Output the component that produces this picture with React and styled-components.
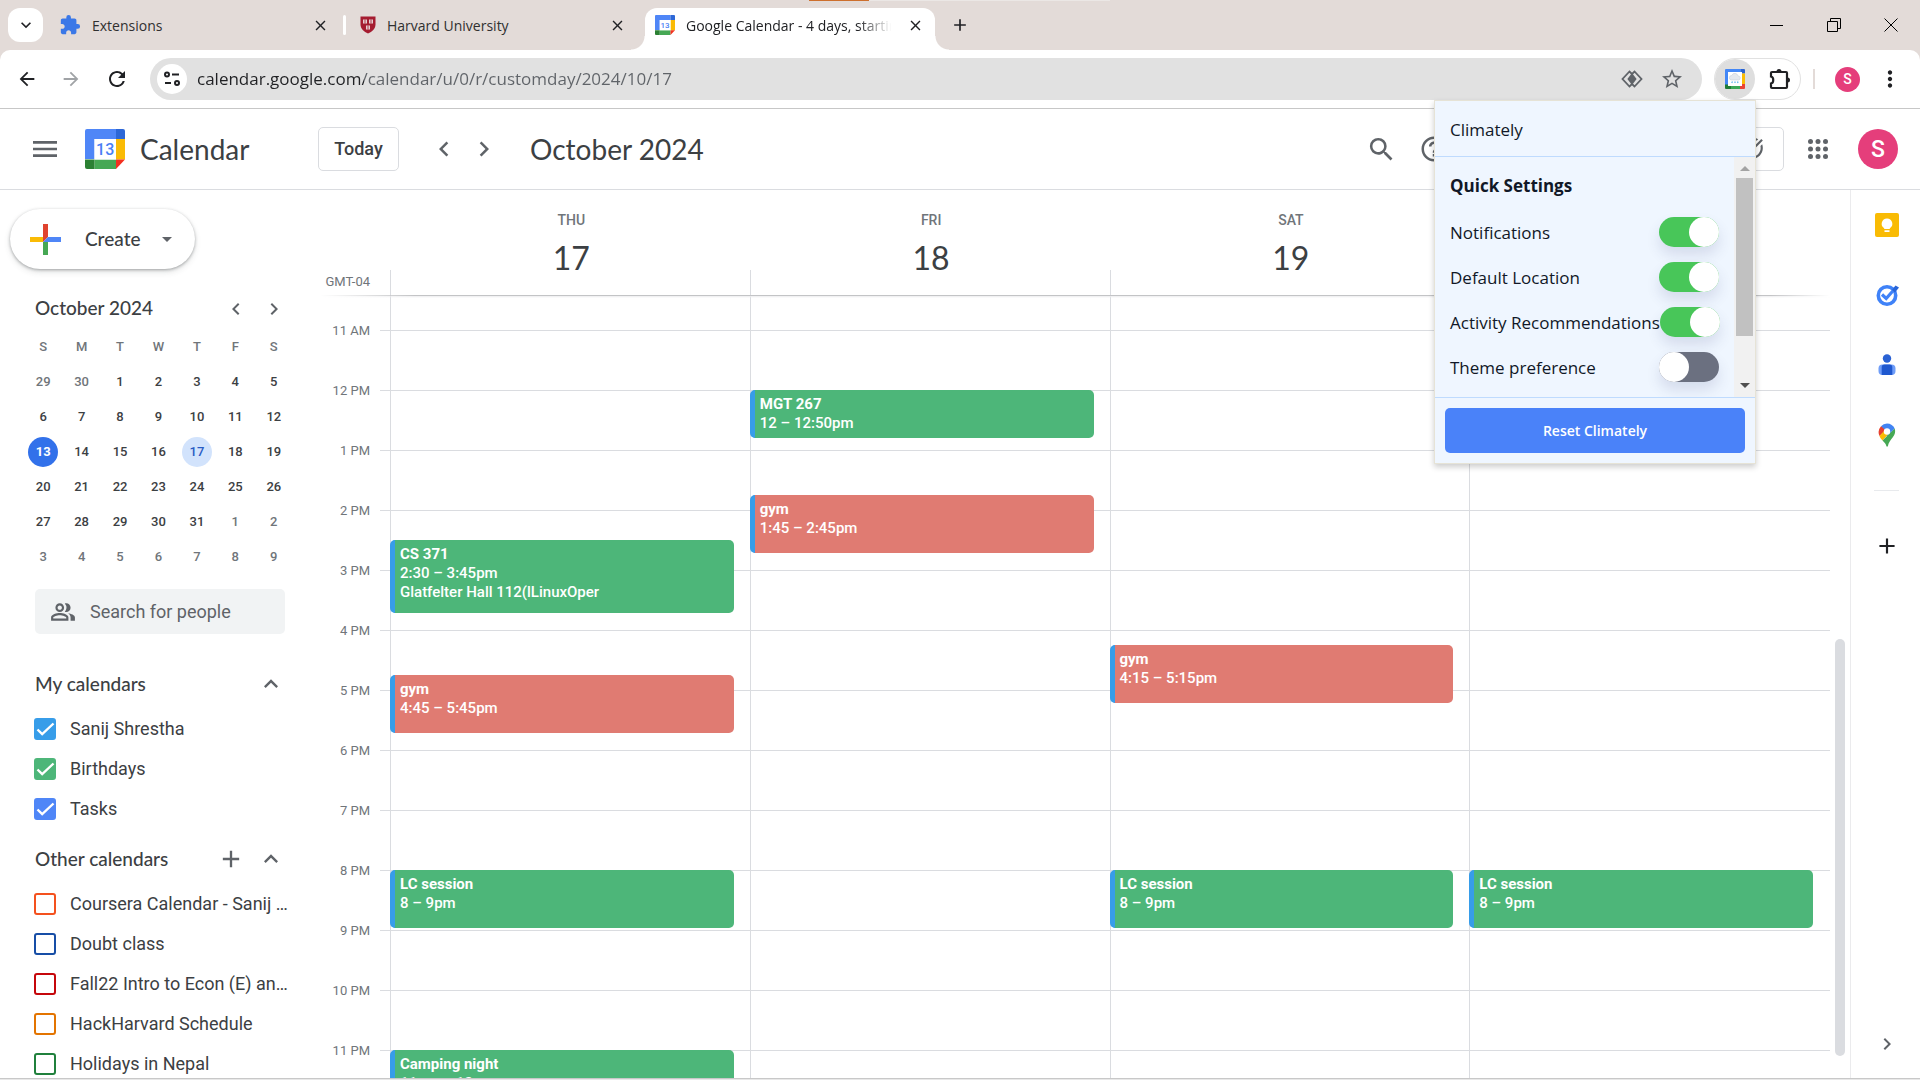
import React from "react";
import styled, { createGlobalStyle, css } from "styled-components";
import {
  MdAdd,
  MdArrowBack,
  MdArrowDropDown,
  MdArrowForward,
  MdChevronLeft,
  MdChevronRight,
  MdClose,
  MdExpandLess,
  MdExpandMore,
  MdExtension,
  MdHelpOutline,
  MdMenu,
  MdMoreVert,
  MdOutlinePeopleAlt,
  MdRefresh,
  MdSearch,
  MdStarOutline,
  MdTaskAlt,
} from "react-icons/md";

const ui = `"Open Sans", "Noto Sans", sans-serif`;
const body = `Roboto, "Liberation Sans", sans-serif`;
const display = `Lato, Roboto, sans-serif`;

const c = {
  strip: "#e3dbd8",
  text: "#3c4043",
  muted: "#70757a",
  icon: "#5f6368",
  line: "#dadce0",
  green: "#4db679",
  red: "#e07b72",
  blue: "#379de9",
  pink: "#e53e7b",
};

const GlobalStyle = createGlobalStyle`
  *, *::before, *::after { box-sizing: border-box; }
  html, body, #root { height: 100%; }
  body { margin: 0; background: #fff; font-family: ${body}; color: ${c.text}; overflow: hidden; }
  button, input { font: inherit; color: inherit; }
  button { border: 0; padding: 0; background: none; }
  h1, h2, h3, p, ul { margin: 0; padding: 0; font-weight: 400; }
  svg { display: block; flex: none; }
`;

const Page = styled.div`
  position: relative;
  display: flex;
  flex-direction: column;
  height: 100vh;
  overflow: hidden;
  background: ${c.strip};
`;

const IconButton = styled.button`
  display: grid;
  place-items: center;
  flex: none;
  width: ${(p) => p.$w || 40}px;
  height: ${(p) => p.$h || 40}px;
  color: ${(p) => p.$color || c.icon};
`;

/* ---------- browser frame ---------- */

const TabStrip = styled.div`
  display: flex;
  align-items: flex-end;
  flex: none;
  height: 50px;
  padding-left: 8px;
  background:
    linear-gradient(#cd6f2d, #cd6f2d) 809px 0 / 60px 1px no-repeat,
    linear-gradient(#ebe7e5, #ebe7e5) 869px 0 / 241px 1px no-repeat,
    ${c.strip};
`;

const TabSearch = styled(IconButton)`
  margin: 0 2px 8px 0;
  border-radius: 12px;
  background: #fff;
`;

const Tab = styled.div`
  position: relative;
  display: flex;
  align-items: center;
  width: ${(p) => p.$w}px;
  height: 42px;
  padding: 0 8px 8px 14px;
  font: 14px/20px ${ui};
  color: #303030;
  ${(p) =>
    p.$active &&
    css`
      margin-left: 5px;
      padding: 0 5px 8px 10px;
      border-radius: 12px 12px 0 0;
      background: #fff;
      color: #202124;
      &::before,
      &::after {
        content: "";
        position: absolute;
        bottom: 0;
        width: 14px;
        height: 14px;
      }
      &::before {
        right: 100%;
        background: radial-gradient(circle at 0 0, transparent 13px, #fff 14px);
      }
      &::after {
        left: 100%;
        background: radial-gradient(circle at 100% 0, transparent 13px, #fff 14px);
      }
    `}
`;

const TabTitle = styled.span`
  flex: 1;
  min-width: 0;
  margin-left: 11px;
  padding-top: 1px;
  overflow: hidden;
  white-space: nowrap;
  ${(p) => p.$fade && "mask-image: linear-gradient(90deg, #000 80%, transparent 96%);"}
`;

const TabDivider = styled.span`
  width: 3px;
  height: 20px;
  margin-bottom: 15px;
  border-radius: 2px;
  background: #fff;
`;

const WindowButtons = styled.div`
  display: flex;
  align-self: stretch;
  margin-left: auto;
  padding-right: 1px;
`;

const Toolbar = styled.div`
  display: flex;
  align-items: center;
  flex: none;
  height: 59px;
  padding-left: 7px;
  border-bottom: 1px solid #c7c7c7;
  border-radius: 10px 10px 0 0;
  background: #fff;
`;

const Omnibox = styled.form`
  display: flex;
  align-items: center;
  flex: 1;
  height: 42px;
  margin: 0 12px 0 11px;
  padding: 0 10px 0 7px;
  border-radius: 21px;
  background: #e1e1e1;
`;

const SiteInfo = styled(IconButton)`
  border-radius: 50%;
  background: #fff;
`;

const Url = styled.input`
  flex: 1;
  min-width: 0;
  height: 30px;
  margin-left: 10px;
  padding: 0;
  border: 0;
  outline: 0;
  background: linear-gradient(90deg, #202124 167px, #5f6368 167px);
  background-clip: text;
  -webkit-text-fill-color: transparent;
  font: 17px/30px ${ui};
`;

const ExtensionPill = styled.div`
  display: flex;
  flex: none;
  gap: 5px;
  width: 87px;
  height: 42px;
  border: 1px solid #e1e1e1;
  border-radius: 21px;
`;

const PillButton = styled(IconButton)`
  border-radius: 50%;
  background: ${(p) => (p.$on ? "#dedede" : "none")};
`;

const BarDivider = styled.span`
  width: 2px;
  height: 20px;
  margin: 0 20px 0 12px;
  background: ${c.strip};
`;

const Avatar = styled.button`
  flex: none;
  width: ${(p) => p.$size}px;
  height: ${(p) => p.$size}px;
  border-radius: 50%;
  background: ${c.pink};
  color: #fff;
  font: 500 ${(p) => p.$font}px/1 ${body};
`;

/* ---------- calendar app ---------- */

const AppShell = styled.div`
  display: flex;
  flex-direction: column;
  flex: 1;
  min-height: 0;
  background: #fff;
`;

const AppHeader = styled.header`
  display: flex;
  align-items: center;
  flex: none;
  height: 81px;
  padding: 0 22px 0 20px;
  border-bottom: 1px solid ${c.line};
`;

const Brand = styled.a`
  display: flex;
  align-items: center;
  gap: 15px;
  width: 233px;
  margin-left: 15px;
  color: ${c.text};
  font: 28px/32px ${display};
  text-decoration: none;
`;

const TodayButton = styled.button`
  width: 81px;
  height: 44px;
  margin-right: 25px;
  border: 1px solid ${c.line};
  border-radius: 5px;
  font: 500 18px/24px ${body};
`;

const Period = styled.h1`
  margin-left: 26px;
  font: 28px/32px ${display};
`;

const HeaderTools = styled.div`
  display: flex;
  align-items: center;
  gap: 20px;
  margin-left: auto;
`;

const SearchTools = styled.div`
  display: flex;
  gap: 3px;
`;

const ViewSwitch = styled.div`
  display: flex;
  justify-content: flex-end;
  width: 127px;
  height: 44px;
  margin: 0 -6px 0 178px;
  border: 1px solid ${c.line};
  border-radius: 5px;
`;

const Columns = styled.div`
  display: flex;
  flex: 1;
  min-height: 0;
`;

const Sidebar = styled.aside`
  flex: none;
  width: 320px;
  padding-top: 19px;
  overflow: hidden;
`;

const CreateButton = styled.button`
  display: flex;
  align-items: center;
  width: 185px;
  height: 60px;
  margin-left: 10px;
  padding: 0 16px 0 20px;
  border-radius: 30px;
  box-shadow: 0 1px 3px rgba(60, 64, 67, 0.4), 0 3px 6px rgba(60, 64, 67, 0.15);
  font: 500 19px/24px ${display};
  & span {
    flex: 1;
    margin-left: 24px;
    text-align: left;
  }
`;

const MiniHeader = styled.div`
  display: flex;
  align-items: center;
  height: 40px;
  margin-top: 20px;
  padding: 0 27px 0 35px;
  & h2 {
    flex: 1;
    padding-bottom: 2px;
    font: 500 19px/24px ${display};
  }
`;

const MiniTable = styled.table`
  width: 269px;
  margin: 0 0 15px 24px;
  border-collapse: collapse;
  table-layout: fixed;
  font: 500 13px/30px ${body};
  & th,
  & td {
    height: 35px;
    padding: 0;
    text-align: center;
    font-weight: 500;
  }
  & th {
    color: ${c.muted};
  }
`;

const DayNumber = styled.span`
  display: block;
  width: 30px;
  height: 30px;
  margin: 0 auto;
  border-radius: 50%;
  color: ${(p) => (p.$out ? c.muted : c.text)};
  ${(p) => p.$today && "background: #3271ea; color: #fff; font-weight: 700;"}
  ${(p) => p.$picked && "background: #d2e3fc; color: #2a5bc4;"}
`;

const PeopleSearch = styled.label`
  display: flex;
  align-items: center;
  gap: 14px;
  width: 250px;
  height: 45px;
  margin-left: 35px;
  padding: 0 14px 0 15px;
  border-radius: 5px;
  background: #f1f3f4;
  color: ${c.icon};
  & input {
    flex: 1;
    min-width: 0;
    padding: 0;
    border: 0;
    outline: 0;
    background: none;
    font: 18px/24px ${body};
  }
  & input::placeholder {
    color: ${c.icon};
    opacity: 1;
  }
`;

const ListHeader = styled.div`
  display: flex;
  align-items: center;
  height: 50px;
  margin-top: ${(p) => p.$top}px;
  padding: 0 29px 0 35px;
  & h3 {
    flex: 1;
    font: 500 19px/24px ${display};
  }
`;

const CalendarList = styled.ul`
  list-style: none;
`;

const CalendarItem = styled.label`
  display: flex;
  align-items: center;
  gap: 14px;
  height: 40px;
  padding: 0 20px 0 34px;
  font: 18px/24px ${body};
  white-space: nowrap;
`;

const CheckWrap = styled.span`
  display: grid;
  flex: none;
  & > * {
    grid-area: 1 / 1;
  }
  & svg {
    pointer-events: none;
  }
`;

const CheckBox = styled.input`
  appearance: none;
  width: 22px;
  height: 22px;
  margin: 0;
  border: 2px solid ${(p) => p.$color};
  border-radius: 3px;
  &:checked {
    background: ${(p) => p.$color};
  }
`;

/* ---------- day grid ---------- */

const Main = styled.main`
  display: flex;
  flex-direction: column;
  flex: 1;
  min-width: 0;
`;

const DayHeads = styled.div`
  display: flex;
  flex: none;
  height: 105px;
  padding-right: 21px;
`;

const Zone = styled.div`
  flex: none;
  align-self: flex-end;
  width: 70px;
  padding: 0 20px 3px 0;
  text-align: right;
  white-space: nowrap;
  color: ${c.muted};
  font: 13px/20px ${body};
`;

const DayHead = styled.div`
  flex: 1;
  padding: 20px 0 0 3px;
  text-align: center;
  color: ${c.muted};
  background: linear-gradient(${c.line}, ${c.line}) 0 100% / 1px 25px no-repeat;
  font: 500 14px/20px ${body};
  & strong {
    display: block;
    margin-top: 10px;
    color: ${c.text};
    font: 32px/36px ${display};
  }
`;

const HeadShade = styled.div`
  flex: none;
  height: 3px;
  margin: 0 20px -3px 0;
  z-index: 1;
  background: linear-gradient(#c3c4c6 1px, #ececee 1px, rgba(255, 255, 255, 0) 3px);
  mask-image: linear-gradient(90deg, transparent, #000 95px, #000 calc(100% - 60px), transparent);
`;

const ScrollArea = styled.div`
  display: flex;
  flex: 1;
  min-height: 0;
  overflow: hidden;
`;

const TimeGrid = styled.div`
  display: grid;
  flex: 1;
  align-content: start;
  & > * {
    grid-area: 1 / 1;
  }
`;

const HourRows = styled.div`
  padding-top: 35px;
`;

const HourRow = styled.div`
  display: flex;
  gap: 10px;
  height: 60px;
  & time {
    width: 50px;
    margin-top: -9px;
    text-align: right;
    color: ${c.muted};
    font: 13px/20px ${body};
  }
  & i {
    flex: 1;
    border-top: 1px solid ${c.line};
  }
`;

const DayColumns = styled.div`
  display: flex;
  margin: 0 1px 0 70px;
`;

/* one grid row stands for five minutes */
const DayColumn = styled.div`
  display: grid;
  flex: 1;
  grid-auto-rows: 5px;
  min-width: 0;
  background: linear-gradient(${c.line}, ${c.line}) 0 0 / 1px 100% no-repeat;
`;

const EventCard = styled.button`
  display: flex;
  flex-direction: column;
  grid-column: 1;
  grid-row: ${(p) => p.$start} / span ${(p) => p.$span};
  margin: 0 16px 2px 0;
  padding: 5px 5px 0;
  border-left: 5px solid ${c.blue};
  border-radius: 5px;
  overflow: hidden;
  background: ${(p) => c[p.$tone]};
  color: #fff;
  text-align: left;
  font: 500 15px/19px ${body};
  & b {
    font-weight: 700;
  }
`;

const ScrollTrack = styled.div`
  flex: none;
  width: 20px;
  padding: 344px 5px 22px;
  &::before {
    content: "";
    display: block;
    height: 100%;
    border-radius: 5px;
    background: ${c.line};
  }
`;

const SidePanel = styled.nav`
  display: flex;
  flex-direction: column;
  align-items: center;
  flex: none;
  width: 70px;
  padding: 10px 0 14px 2px;
  border-left: 1px solid #ebebed;
  & hr {
    width: 25px;
    margin: 10px 0 30px;
    border: 0;
    border-top: 1px solid #e8eaed;
  }
  & > :last-child {
    margin-top: auto;
  }
`;

const PanelButton = styled(IconButton)`
  margin-bottom: 20px;
`;

const TaskbarEdge = styled.div`
  flex: none;
  height: 2px;
  border-top: 1px solid #c8c8c8;
  background: #e8e8e8;
`;

/* ---------- extension popup ---------- */

const Popup = styled.section`
  position: absolute;
  top: 100px;
  right: 164px;
  z-index: 5;
  display: flex;
  flex-direction: column;
  width: 322px;
  border: 1px solid #e6e3d6;
  background: #eff6ff;
  box-shadow: 0 3px 6px rgba(0, 0, 0, 0.2);
  color: #111827;
  font: 17px/28px ${ui};
`;

const PopupTitle = styled.header`
  height: 56px;
  padding: 15px 15px 12px;
  border-bottom: 1px solid #bfdbfe;
`;

const PopupBody = styled.div`
  display: flex;
  height: 240px;
`;

const Settings = styled.div`
  flex: 1;
  padding: 15px 15px 0;
  overflow: hidden;
  & h2 {
    margin-bottom: 9px;
    font: 700 17px/28px ${ui};
  }
`;

const Setting = styled.label`
  display: flex;
  align-items: center;
  justify-content: space-between;
  height: 45px;
  white-space: nowrap;
  & span {
    padding-top: 2px;
  }
`;

const Toggle = styled.input`
  appearance: none;
  display: flex;
  flex: none;
  width: 60px;
  height: 30px;
  margin: 0;
  border-radius: 15px;
  background: #6b7080;
  box-shadow: 0 8px 14px rgba(60, 64, 120, 0.14);
  &::before {
    content: "";
    width: 30px;
    height: 30px;
    border-radius: 50%;
    background: #fff;
  }
  &:checked {
    justify-content: flex-end;
    background: #48c659;
  }
`;

const PopupScroll = styled.div`
  display: flex;
  flex-direction: column;
  align-items: center;
  flex: none;
  width: 21px;
  padding: 9px 0;
  background: #f1f1f1;
  &::before,
  &::after {
    content: "";
    border: 5px solid transparent;
  }
  &::before {
    border-top: 0;
    border-bottom-color: #a3a3a3;
  }
  &::after {
    margin-top: auto;
    border-bottom: 0;
    border-top-color: #505050;
  }
  & span {
    width: 17px;
    height: 158px;
    margin-top: 7px;
    background: #c1c1c1;
  }
`;

const PopupFooter = styled.footer`
  padding: 10px;
  border-top: 1px solid #bfdbfe;
`;

const ResetButton = styled.button`
  display: block;
  width: 100%;
  height: 45px;
  border-radius: 5px;
  background: #4a82f9;
  color: #fff;
  font: 600 14px/20px ${ui};
`;

/* ---------- drawings ---------- */

const CalendarLogo = ({ size }) => (
  <svg width={size} height={size} viewBox="0 0 40 40" aria-hidden="true">
    <path d="M2 0h29v10H9.500v20H0V2a2 2 0 0 1 2-2z" fill="#4f86f7" />
    <path d="M31 0h7a2 2 0 0 1 2 2v8h-9z" fill="#2d67d6" />
    <path d="M31 10h9v20.500h-9z" fill="#fabb05" />
    <path d="M9.500 30.500H31V40H9.500z" fill="#46a854" />
    <path d="M0 30.500h9.500V40H2a2 2 0 0 1-2-2z" fill="#2b8033" />
    <path d="M31 30.500h9L31 40z" fill="#f3301f" />
    <path d="M9.500 10H31v20.500H9.500z" fill="#fff" />
    <text x="20.200" y="26" textAnchor="middle" fontFamily="Roboto" fontWeight="500" fontSize="16" fill="#4a80f5">
      13
    </text>
  </svg>
);

const ClimatelyLogo = () => (
  <svg width="20" height="20" viewBox="0 0 40 40" aria-hidden="true">
    <path d="M2 0h31v6H6v28H0V2a2 2 0 0 1 2-2z" fill="#4387f6" />
    <path d="M32 0h6a2 2 0 0 1 2 2v7h-8z" fill="#2962d0" />
    <path d="M34 9h6v21h-6z" fill="#fbbc04" />
    <path d="M12 34h18v6H12z" fill="#3aa757" />
    <path d="M0 31h12v9H2a2 2 0 0 1-2-2z" fill="#1f7c37" />
    <path d="M30 30h10v8a2 2 0 0 1-2 2h-8z" fill="#ea4335" />
    <path d="M6 6h28v28H6z" fill="#fff" />
    <path d="M13 22a4.500 4.500 0 0 1 .5-9 6.500 6.500 0 0 1 12.500 1 4 4 0 0 1 1 8z" fill="#e4e8ee" stroke="#c3cad4" />
    <path d="M15 25l-1.500 3M20 25v3M25 25l1 3" stroke="#5bb4ee" strokeWidth="2.500" />
  </svg>
);

const Shield = () => (
  <svg width="16" height="18" viewBox="0 0 16 18" aria-hidden="true">
    <path d="M.5.5h15v8c0 4.500-3.500 7-7.500 9C4 15.500.5 13 .5 8.500z" fill="#a51c30" />
    <path d="M3 3.500h4v4H3zM9 3.500h4v4H9zM6 9.500h4v4H6z" fill="#e6cdd0" />
    <path d="M5 3.500v4M11 3.500v4M8 9.500v4" stroke="#a51c30" strokeWidth=".8" />
  </svg>
);

const TuneIcon = () => (
  <svg width="18" height="16" viewBox="0 0 18 16" fill="none" stroke="#202124" strokeWidth="2" aria-hidden="true">
    <circle cx="4" cy="3.500" r="2" />
    <path d="M9 3.500h7M2 12h6" />
    <circle cx="14" cy="12" r="2" />
  </svg>
);

const DiamondIcon = () => (
  <svg width="22" height="18" viewBox="0 0 22 18" fill="none" stroke="#5f6368" strokeWidth="1.800" aria-hidden="true">
    <path d="M11 4L8.500 1.500 1.500 9l7 7.500L11 14M11 4l2.500-2.500L20.500 9l-7 7.500L11 14" />
    <path d="M11 4.500l3.500 4.500-3.500 4.500L7.500 9z" fill="#5f6368" />
  </svg>
);

const PuzzleIcon = () => (
  <svg width="24" height="24" viewBox="0 0 24 24" aria-hidden="true">
    <path
      d="M4 5h14a1 1 0 0 1 1 1v14a1 1 0 0 1-1 1H4a1 1 0 0 1-1-1v-3.500c3-.5 3-6.500 0-7V6a1 1 0 0 1 1-1z"
      fill="none"
      stroke="#202124"
      strokeWidth="2.200"
    />
    <path d="M8.500 4.500a2.500 2.500 0 0 1 5 0zM19.500 10.500a2.500 2.500 0 0 1 0 5z" fill="#202124" />
  </svg>
);

const AppsIcon = () => (
  <svg width="20" height="20" viewBox="0 0 20 20" fill="#5f6368" aria-hidden="true">
    {[2.5, 10, 17.5].map((y) => [2.5, 10, 17.5].map((x) => <circle key={`${x}-${y}`} cx={x} cy={y} r="2.500" />))}
  </svg>
);

const CreatePlus = () => (
  <svg width="31" height="31" viewBox="0 0 31 31" aria-hidden="true">
    <path d="M13 0h5v13l-5 5z" fill="#e0432f" />
    <path d="M31 13v5H13l5-5z" fill="#4f86f7" />
    <path d="M0 13h13v5H0z" fill="#fabb05" />
    <path d="M13 18h5v13h-5z" fill="#46a854" />
  </svg>
);

const KeepIcon = () => (
  <svg width="24" height="24" viewBox="0 0 24 24" aria-hidden="true">
    <rect width="24" height="24" rx="2" fill="#f9bb04" />
    <path d="M12 5.500a5.300 5.300 0 0 0-2.800 9.800V16h5.600v-.7A5.300 5.300 0 0 0 12 5.500zM9.500 17.300h5v1.700h-5z" fill="#fff" />
  </svg>
);

const TasksIcon = () => (
  <svg width="24" height="24" viewBox="0 0 24 24" aria-hidden="true">
    <circle cx="12" cy="12.500" r="8.700" fill="none" stroke="#3f82f8" strokeWidth="3.600" />
    <path d="M7 11.500l4.200 4L20.500 5" fill="none" stroke="#3f82f8" strokeWidth="3.200" />
    <path d="M17 7l3.500-4.500 3.500 2-4 5z" fill="#2764d8" />
  </svg>
);

const ContactsIcon = () => (
  <svg width="22" height="24" viewBox="0 0 22 24" aria-hidden="true">
    <circle cx="11" cy="5.500" r="4.200" fill="#2a62d4" />
    <rect x="2.500" y="11.500" width="17" height="10.500" rx="4" fill="#6f9df8" />
    <path d="M8.500 11.500h5a2.800 2.800 0 0 1 2.800 2.800V22H5.700v-7.700a2.800 2.800 0 0 1 2.800-2.800z" fill="#1f58cf" />
  </svg>
);

const MapsIcon = () => (
  <svg width="18" height="24" viewBox="0 0 18 24" aria-hidden="true">
    <path d="M9 .5c3.500 0 6.500 2 7.700 5L9 13.500 3 3.200A8.300 8.300 0 0 1 9 .5z" fill="#4184f3" />
    <path d="M3 3.200l4.500 4L1.500 13A9 9 0 0 1 3 3.200z" fill="#e8402f" />
    <path d="M7 7l3.500 4-6 6.500c-1.500-1.800-2.600-3-3-4.500z" fill="#fabb05" />
    <path d="M16.700 5.500c1 3 .3 6-1.700 8.500-2.500 3-4.500 5.500-5.200 9.500H8.500c-.5-2.500-2-4-4-6z" fill="#46a854" />
    <circle cx="9" cy="8.500" r="3.200" fill="#fff" />
  </svg>
);

const CheckMark = () => (
  <svg width="22" height="22" viewBox="0 0 22 22" fill="none" stroke="#fff" strokeWidth="2.400" aria-hidden="true">
    <path d="M3.500 11.500l4.700 4.700L19.500 5.500" />
  </svg>
);

/* ---------- data ---------- */

const weeks = [
  [29, 30, 1, 2, 3, 4, 5],
  [6, 7, 8, 9, 10, 11, 12],
  [13, 14, 15, 16, 17, 18, 19],
  [20, 21, 22, 23, 24, 25, 26],
  [27, 28, 29, 30, 31, 1, 2],
  [3, 4, 5, 6, 7, 8, 9],
];

const isOutside = (week, n) => (week === 0 && n > 20) || (week > 3 && n < 20);

const myCalendars = [
  ["Sanij Shrestha", "#379de9"],
  ["Birthdays", "#4db679"],
  ["Tasks", "#4f86f7"],
];

const otherCalendars = [
  ["Coursera Calendar - Sanij …", "#f4511e"],
  ["Doubt class", "#174ea6"],
  ["Fall22 Intro to Econ (E) an…", "#c5070b"],
  ["HackHarvard Schedule", "#e37400"],
  ["Holidays in Nepal", "#20803c"],
];

const hours = ["11 AM", "12 PM", "1 PM", "2 PM", "3 PM", "4 PM", "5 PM", "6 PM", "7 PM", "8 PM", "9 PM", "10 PM", "11 PM"];

const GRID_START = 10 * 60 + 25;

const days = [
  {
    name: "THU",
    date: "17",
    events: [
      { from: 870, mins: 75, tone: "green", lines: ["CS 371", "2:30 – 3:45pm", "Glatfelter Hall 112(lLinuxOper"] },
      { from: 1005, mins: 60, tone: "red", lines: ["gym", "4:45 – 5:45pm"] },
      { from: 1200, mins: 60, tone: "green", lines: ["LC session", "8 – 9pm"] },
      { from: 1380, mins: 60, tone: "green", lines: ["Camping night", "11pm – 12am"] },
    ],
  },
  {
    name: "FRI",
    date: "18",
    events: [
      { from: 720, mins: 50, tone: "green", lines: ["MGT 267", "12 – 12:50pm"] },
      { from: 825, mins: 60, tone: "red", lines: ["gym", "1:45 – 2:45pm"] },
    ],
  },
  {
    name: "SAT",
    date: "19",
    events: [
      { from: 975, mins: 60, tone: "red", lines: ["gym", "4:15 – 5:15pm"] },
      { from: 1200, mins: 60, tone: "green", lines: ["LC session", "8 – 9pm"] },
    ],
  },
  { events: [{ from: 1200, mins: 60, tone: "green", lines: ["LC session", "8 – 9pm"] }] },
];

const settings = [
  ["Notifications", true],
  ["Default Location", true],
  ["Activity Recommendations", true],
  ["Theme preference", false],
];

/* ---------- parts ---------- */

const Browser = () => (
  <>
    <TabStrip>
      <TabSearch $w={35} $h={34} $color="#202124" aria-label="Search tabs">
        <MdExpandMore size={20} />
      </TabSearch>
      <Tab $w={298}>
        <MdExtension size={22} color="#3b78e7" />
        <TabTitle>Extensions</TabTitle>
        <IconButton $w={30} $h={30} $color="#202124" aria-label="Close Extensions">
          <MdClose size={17} />
        </IconButton>
      </Tab>
      <TabDivider />
      <Tab $w={294}>
        <Shield />
        <TabTitle>Harvard University</TabTitle>
        <IconButton $w={30} $h={30} $color="#202124" aria-label="Close Harvard University">
          <MdClose size={17} />
        </IconButton>
      </Tab>
      <Tab $w={290} $active>
        <CalendarLogo size={20} />
        <TabTitle $fade>Google Calendar - 4 days, starting</TabTitle>
        <IconButton $w={30} $h={30} $color="#202124" aria-label="Close Google Calendar">
          <MdClose size={17} />
        </IconButton>
      </Tab>
      <IconButton $w={50} $h={50} $color="#202124" aria-label="New tab">
        <MdAdd size={20} />
      </IconButton>
      <WindowButtons>
        <IconButton $w={57} $h={50} aria-label="Minimise">
          <svg width="13" height="13" stroke="#000"><path d="M0 6.500h13" /></svg>
        </IconButton>
        <IconButton $w={57} $h={50} aria-label="Restore">
          <svg width="14" height="14" fill="none" stroke="#000"><path d="M.5 3.500h10v10H.5zM3.500 3.500v-3h10v10h-3" /></svg>
        </IconButton>
        <IconButton $w={57} $h={50} aria-label="Close window">
          <svg width="14" height="14" stroke="#000"><path d="M.5.5l13 13M13.500.5l-13 13" /></svg>
        </IconButton>
      </WindowButtons>
    </TabStrip>
    <Toolbar>
      <IconButton $color="#202124" aria-label="Back"><MdArrowBack size={22} /></IconButton>
      <IconButton $w={48} $color="#a0a3a6" aria-label="Forward"><MdArrowForward size={22} /></IconButton>
      <IconButton $w={44} $color="#202124" aria-label="Reload"><MdRefresh size={24} /></IconButton>
      <Omnibox onSubmit={(e) => e.preventDefault()}>
        <SiteInfo type="button" $w={30} $h={30} aria-label="Site information"><TuneIcon /></SiteInfo>
        <Url aria-label="Address" defaultValue="calendar.google.com/calendar/u/0/r/customday/2024/10/17" />
        <IconButton type="button" aria-label="Page tools"><DiamondIcon /></IconButton>
        <IconButton type="button" aria-label="Bookmark"><MdStarOutline size={24} /></IconButton>
      </Omnibox>
      <ExtensionPill>
        <PillButton $on aria-label="Climately"><ClimatelyLogo /></PillButton>
        <PillButton aria-label="Extensions"><PuzzleIcon /></PillButton>
      </ExtensionPill>
      <BarDivider />
      <Avatar $size={25} $font={14} aria-label="Profile">S</Avatar>
      <IconButton $w={60} $color="#202124" aria-label="Browser menu"><MdMoreVert size={26} /></IconButton>
    </Toolbar>
  </>
);

const Header = () => (
  <AppHeader>
    <IconButton $w={50} $h={50} aria-label="Main menu"><MdMenu size={32} /></IconButton>
    <Brand href="#calendar">
      <CalendarLogo size={40} />
      Calendar
    </Brand>
    <TodayButton>Today</TodayButton>
    <IconButton aria-label="Previous period"><MdChevronLeft size={30} /></IconButton>
    <IconButton aria-label="Next period"><MdChevronRight size={30} /></IconButton>
    <Period>October 2024</Period>
    <HeaderTools>
      <SearchTools>
        <IconButton $w={50} aria-label="Search"><MdSearch size={31} /></IconButton>
        <IconButton $w={50} aria-label="Help"><MdHelpOutline size={30} /></IconButton>
      </SearchTools>
      <ViewSwitch>
        <IconButton $w={63} aria-label="Switch to tasks"><MdTaskAlt size={26} /></IconButton>
      </ViewSwitch>
      <IconButton aria-label="Google apps"><AppsIcon /></IconButton>
      <Avatar $size={40} $font={23} aria-label="Account">S</Avatar>
    </HeaderTools>
  </AppHeader>
);

const CalendarRows = ({ items, checked }) => (
  <CalendarList>
    {items.map(([name, color]) => (
      <li key={name}>
        <CalendarItem>
          <CheckWrap>
            <CheckBox type="checkbox" $color={color} defaultChecked={checked} />
            {checked && <CheckMark />}
          </CheckWrap>
          <span>{name}</span>
        </CalendarItem>
      </li>
    ))}
  </CalendarList>
);

const Side = () => (
  <Sidebar>
    <CreateButton>
      <CreatePlus />
      <span>Create</span>
      <MdArrowDropDown size={24} color={c.icon} />
    </CreateButton>
    <MiniHeader>
      <h2>October 2024</h2>
      <IconButton $w={38} aria-label="Previous month"><MdChevronLeft size={24} /></IconButton>
      <IconButton $w={38} aria-label="Next month"><MdChevronRight size={24} /></IconButton>
    </MiniHeader>
    <MiniTable>
      <thead>
        <tr>{"SMTWTFS".split("").map((d, i) => <th key={i} scope="col">{d}</th>)}</tr>
      </thead>
      <tbody>
        {weeks.map((week, w) => (
          <tr key={w}>
            {week.map((n) => (
              <td key={n}>
                <DayNumber $out={isOutside(w, n)} $today={n === 13} $picked={n === 17}>{n}</DayNumber>
              </td>
            ))}
          </tr>
        ))}
      </tbody>
    </MiniTable>
    <PeopleSearch>
      <MdOutlinePeopleAlt size={26} />
      <input type="text" placeholder="Search for people" aria-label="Search for people" />
    </PeopleSearch>
    <ListHeader $top={25}>
      <h3>My calendars</h3>
      <IconButton aria-label="Collapse my calendars"><MdExpandLess size={28} /></IconButton>
    </ListHeader>
    <CalendarRows items={myCalendars} checked />
    <ListHeader $top={5}>
      <h3>Other calendars</h3>
      <IconButton aria-label="Add other calendars"><MdAdd size={28} /></IconButton>
      <IconButton aria-label="Collapse other calendars"><MdExpandLess size={28} /></IconButton>
    </ListHeader>
    <CalendarRows items={otherCalendars} />
  </Sidebar>
);

const Schedule = () => (
  <Main>
    <DayHeads>
      <Zone>GMT-04</Zone>
      {days.map((d, i) => (
        <DayHead key={i}>
          {d.name}
          {d.date && <strong>{d.date}</strong>}
        </DayHead>
      ))}
    </DayHeads>
    <HeadShade />
    <ScrollArea>
      <TimeGrid>
        <HourRows>
          {hours.map((h) => (
            <HourRow key={h}>
              <time>{h}</time>
              <i />
            </HourRow>
          ))}
        </HourRows>
        <DayColumns>
          {days.map((d, i) => (
            <DayColumn key={i}>
              {d.events.map((e) => (
                <EventCard key={e.from} $tone={e.tone} $start={(e.from - GRID_START) / 5 + 1} $span={e.mins / 5}>
                  <b>{e.lines[0]}</b>
                  {e.lines.slice(1).map((line) => <span key={line}>{line}</span>)}
                </EventCard>
              ))}
            </DayColumn>
          ))}
        </DayColumns>
      </TimeGrid>
      <ScrollTrack />
    </ScrollArea>
  </Main>
);

const ClimatelyPopup = () => (
  <Popup aria-label="Climately">
    <PopupTitle>Climately</PopupTitle>
    <PopupBody>
      <Settings>
        <h2>Quick Settings</h2>
        {settings.map(([name, on]) => (
          <Setting key={name}>
            <span>{name}</span>
            <Toggle type="checkbox" role="switch" defaultChecked={on} />
          </Setting>
        ))}
      </Settings>
      <PopupScroll><span /></PopupScroll>
    </PopupBody>
    <PopupFooter>
      <ResetButton>Reset Climately</ResetButton>
    </PopupFooter>
  </Popup>
);

export default function App() {
  return (
    <Page>
      <GlobalStyle />
      <Browser />
      <AppShell>
        <Header />
        <Columns>
          <Side />
          <Schedule />
          <SidePanel aria-label="Side panel">
            <PanelButton $h={50} aria-label="Keep"><KeepIcon /></PanelButton>
            <PanelButton $h={50} aria-label="Tasks"><TasksIcon /></PanelButton>
            <PanelButton $h={50} aria-label="Contacts"><ContactsIcon /></PanelButton>
            <PanelButton $h={50} aria-label="Maps"><MapsIcon /></PanelButton>
            <hr />
            <IconButton $h={50} $color="#202124" aria-label="Get add-ons"><MdAdd size={26} /></IconButton>
            <IconButton aria-label="Hide side panel"><MdChevronRight size={24} /></IconButton>
          </SidePanel>
        </Columns>
      </AppShell>
      <TaskbarEdge />
      <ClimatelyPopup />
    </Page>
  );
}
